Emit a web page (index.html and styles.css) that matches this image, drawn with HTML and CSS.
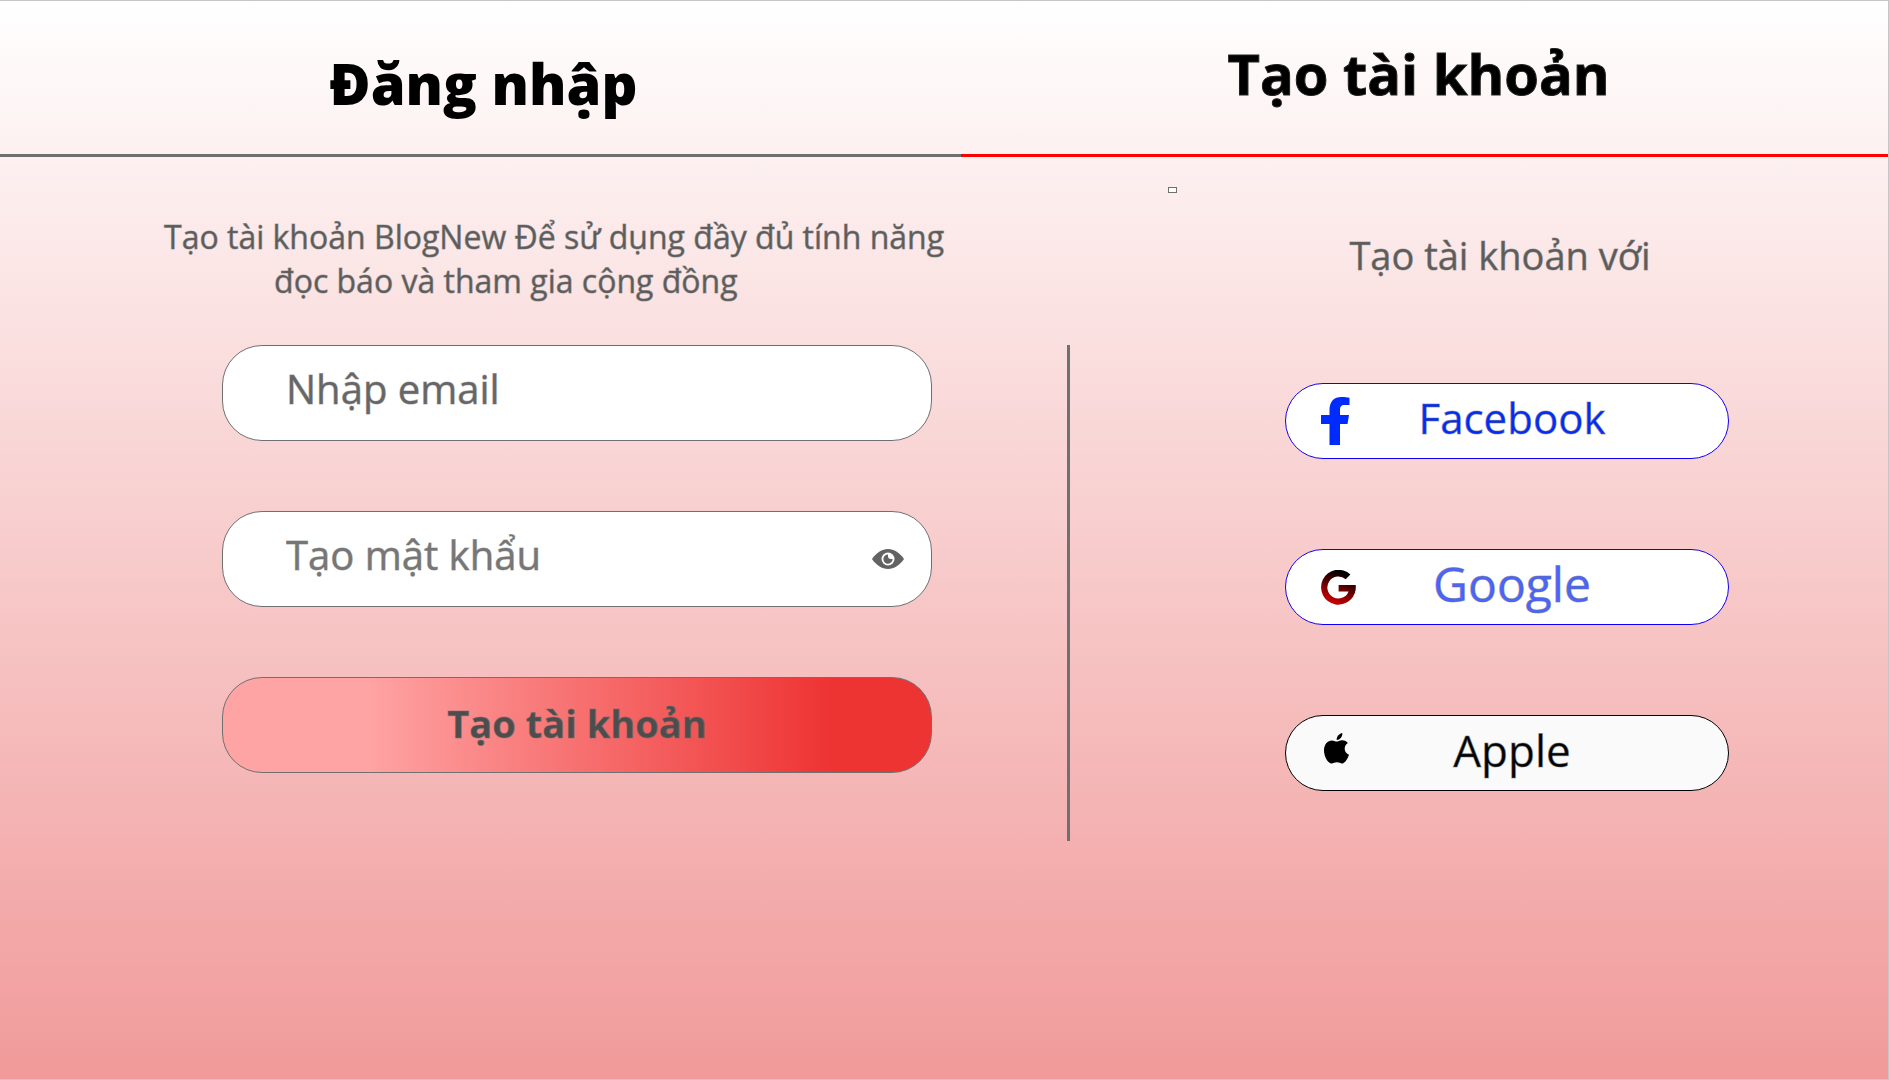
FILE: index.html
```html
<!DOCTYPE html>
<html lang="vi">
<head>
<meta charset="utf-8">
<meta name="viewport" content="width=device-width, initial-scale=1">
<title>Tạo tài khoản</title>
<link rel="stylesheet" href="styles.css">
</head>
<body>
<div class="page">
  <nav class="tabs">
    <a class="tab tab-login" href="#login">Đăng nhập</a>
    <a class="tab tab-register" href="#register">Tạo tài khoản</a>
  </nav>
  <main class="content">
    <section class="register">
      <p class="intro">
        <span class="intro-first">Tạo tài khoản BlogNew Để sử dụng đầy đủ tính năng</span>
        <span class="intro-second">đọc báo và tham gia cộng đồng</span>
      </p>
      <form class="form">
        <div class="field">
          <input class="input input-email" type="email" placeholder="Nhập email" aria-label="Nhập email">
        </div>
        <div class="field">
          <input class="input" type="password" placeholder="Tạo mật khẩu" aria-label="Tạo mật khẩu">
          <button class="reveal" type="button" aria-label="Hiện mật khẩu">
            <svg width="32" height="20" viewBox="0 0 32 20">
              <path fill="#636363" d="M0 10C4 4 10 0 16 0s12 4 16 10c-4 6-10 10-16 10S4 16 0 10z"/>
              <circle cx="16" cy="10" r="6.500" fill="#fff"/>
              <path fill="#636363" d="M16 5.500A4.600 4.600 0 1 0 20.600 10h-2.200A2.400 2.400 0 0 1 16 7.600z"/>
            </svg>
          </button>
        </div>
        <button class="submit" type="submit">Tạo tài khoản</button>
      </form>
    </section>
    <div class="divider"></div>
    <section class="social">
      <span class="marker"></span>
      <h2 class="social-title">Tạo tài khoản với</h2>
      <div class="social-list">
        <button class="provider facebook" type="button">
          <svg width="29" height="48" viewBox="0 0 29 48">
            <path fill="#002bff" d="M8.500 48V27H0v-9h8.500v-5C8.500 4.500 13 0 20.500 0c3.300 0 6 .3 8 .8V8h-4.500c-4.200 0-5 2-5 5v5h9l-1.500 9h-7.500v21z"/>
          </svg>
          <span class="provider-name">Facebook</span>
        </button>
        <button class="provider google" type="button">
          <svg width="35" height="35" viewBox="0 0 35 35">
            <defs>
              <linearGradient id="google-fill" x1="0.700" y1="0" x2="0.300" y2="1">
                <stop offset="0.100" stop-color="#000"/>
                <stop offset="1" stop-color="#d90000"/>
              </linearGradient>
            </defs>
            <path fill="url(#google-fill)" d="M29.400 4.600l-4.700 4.700A11 11 0 1 0 27.600 21.500H17.600V15H34.700A17.400 17.400 0 1 1 29.400 4.600z"/>
          </svg>
          <span class="provider-name">Google</span>
        </button>
        <button class="provider apple" type="button">
          <svg width="31" height="41" viewBox="-3 0 31 41">
            <path d="M18.300 0c.3 2-.5 3.700-1.600 5-1.100 1.200-2.500 2-4 1.900-.2-1.800.6-3.500 1.700-4.700C15.500 1 17 .2 18.300 0z"/>
            <path d="M12.500 8.600c1.300 0 3.200-1.500 5.800-1.400 2.500.1 4.400 1.100 5.600 2.800-4.800 3.100-4 9.700 1.100 11.800-1.300 3.700-4 8.700-6.900 8.700-2 0-2.700-1.200-5.200-1.200s-3.300 1.200-5.200 1.200C3.900 30.500 0 23.800 0 17.300c0-6.300 4-9.900 7.700-9.900 2 0 3.600 1.200 4.800 1.200z"/>
          </svg>
          <span class="provider-name">Apple</span>
        </button>
      </div>
    </section>
  </main>
</div>
</body>
</html>
```
FILE: styles.css
```css
* {
  box-sizing: border-box;
}

body {
  margin: 0;
  font-family: "Open Sans", "Noto Sans", sans-serif;
  color: #4d4d4d;
}

button,
input {
  margin: 0;
  padding: 0;
  border: 0;
  background: none;
  font: inherit;
  color: inherit;
}

svg {
  display: block;
}

.page {
  min-height: 100vh;
  border: 1px solid #c6c6c6;
  border-left: 0;
  background: linear-gradient(#ffffff, #f19a9a);
}

/* Tabs */
.tabs {
  display: grid;
  grid-template-columns: 961fr 927fr;
  height: 156px;
}

.tab {
  border-bottom: 3px solid #707070;
  color: #000;
  font-size: 56px;
  font-weight: 700;
  line-height: 76px;
  text-align: center;
  text-decoration: none;
}

.tab-login {
  padding: 44px 0 0 6px;
  font-weight: 800;
}

.tab-register {
  padding: 34px 12px 0 0;
  border-color: #f00;
  -webkit-text-stroke: 1px #222;
}

/* Two panes with the rule between them */
.content {
  display: grid;
  grid-template-columns: 1067fr 3px 818fr;
}

.divider {
  height: 496px;
  margin-top: 188px;
  background: #707070;
}

.register {
  padding-top: 58px;
}

.intro {
  margin: 0 0 42px;
  color: #5a5c5b;
  font-size: 32px;
  line-height: 44px;
  white-space: nowrap;
  -webkit-text-stroke: 1px #70707080;
}

.intro-first,
.intro-second {
  display: block;
}

.intro-first {
  padding-left: 164px;
}

.intro-second {
  padding-left: 274px;
}

.form {
  display: flex;
  flex-direction: column;
  gap: 70px;
  margin: 0 135px 0 222px;
}

.field,
.submit {
  height: 96px;
  border: 1px solid #707070;
  border-radius: 40px;
}

.field {
  display: flex;
  align-items: center;
  padding: 0 27px 0 63px;
  background: #fff;
}

.input {
  flex: 1;
  min-width: 0;
  height: 100%;
  padding-bottom: 10px;
  font-size: 40px;
  outline: 0;
  -webkit-text-stroke: 1px #70707080;
}

.input::placeholder {
  color: #777;
  opacity: 1;
}

.input-email::placeholder {
  color: #666;
}

.submit {
  padding-bottom: 4px;
  background: linear-gradient(90deg, #ffa4a4 20%, #ee3333 86%);
  color: #4d4d4d;
  font-size: 38px;
  font-weight: 700;
  -webkit-text-stroke: 1px #70707080;
}

/* Sign-up providers */
.social {
  padding-left: 56px;
}

.marker {
  display: block;
  width: 9px;
  height: 6px;
  margin: 30px 0 0 42px;
  border: 1px solid #707070;
  background: #fff;
}

.social-title {
  margin: 36px 14px 0 0;
  color: #5a5c5b;
  font-size: 38px;
  font-weight: 400;
  line-height: 52px;
  text-align: center;
  -webkit-text-stroke: 1px #70707080;
}

.social-list {
  display: flex;
  flex-direction: column;
  align-items: center;
  gap: 90px;
  margin-top: 102px;
}

.provider {
  display: grid;
  grid-template-columns: 40px 1fr;
  align-items: center;
  width: 444px;
  height: 76px;
  padding: 0 65px 0 35px;
  border: 1px solid #1400f0;
  border-radius: 38px;
  background: #fff;
  font-size: 44px;
  line-height: 60px;
  -webkit-text-stroke: 1px #70707080;
}

.provider-name {
  padding-bottom: 6px;
}

.facebook {
  color: #002bff;
  font-size: 42px;
}

.google {
  color: #4a64ff;
  font-size: 48px;
}

.apple {
  border-color: #000;
  background: #fafafa;
  color: #000;
}
```
